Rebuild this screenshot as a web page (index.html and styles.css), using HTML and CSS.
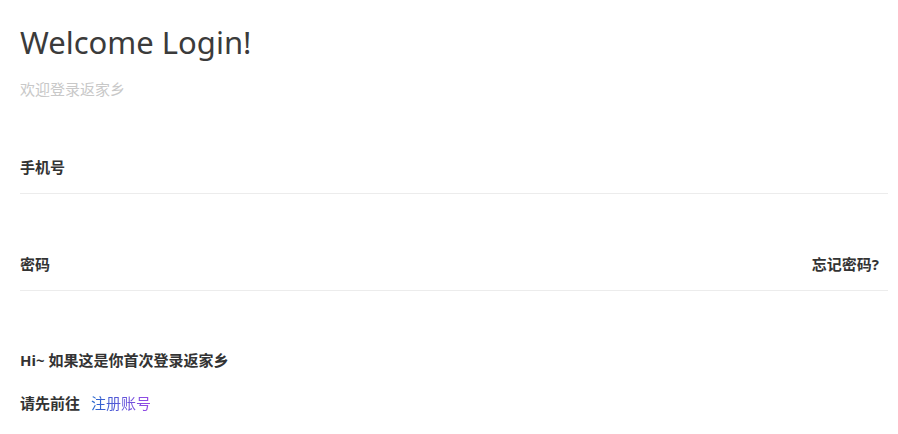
FILE: index.html
```html
<!DOCTYPE html>
<html lang="zh-CN">
<head>
    <meta charset="UTF-8">
    <meta name="viewport" content="width=device-width, initial-scale=1.0">
    <title>登录</title>
    <link rel="stylesheet" href="styles.css">
</head>
<body>
    <div class="login-container">
        <h1>Welcome Login!</h1>
        <p class="sub-title">欢迎登录返家乡</p>
        <form>
            <div class="form-item">
                <label for="phone">手机号</label>
                <input type="text" id="phone" name="phone">
            </div>
            <div class="form-item">
                <label for="password">密码</label>
                <input type="password" id="password" name="password">
                <a class="forget" href="#">忘记密码?</a>
            </div>
        </form>
        <p class="tips">Hi~ 如果这是你首次登录返家乡</p>
        <p class="tips register">请先前往 <a href="#">注册账号</a></p>
    </div>
</body>
</html>
```

FILE: styles.css
```css
body {
    margin: 0;
    font-family: "Noto Sans", "Noto Sans CJK SC", sans-serif;
    background-color: #ffffff;
    color: #333;
}
.login-container {
    padding: 22px 10px 0 20px;
}
.login-container h1 {
    margin: 0;
    font-size: 31px;
    line-height: 40px;
    font-weight: normal;
    color: #3b3b3b;
}
.sub-title {
    margin: 17px 0 0;
    font-size: 15px;
    line-height: 20px;
    color: #c8c8c8;
}
.form-item {
    display: flex;
    align-items: center;
    padding: 60px 9px 16px 0;
    border-bottom: 1px solid #ececec;
}
.form-item:first-child {
    padding-top: 58px;
}
.form-item label {
    font-size: 15px;
    line-height: 20px;
    font-weight: bold;
    color: #333;
}
.form-item input {
    flex: 1;
    border: none;
    outline: none;
    height: 20px;
    padding: 0 10px;
    background: transparent;
}
.form-item .forget {
    font-size: 15px;
    line-height: 20px;
    font-weight: bold;
    color: #333;
    text-decoration: none;
}
.tips {
    margin: 59px 0 0;
    font-size: 15px;
    line-height: 20px;
    font-weight: bold;
    color: #333;
}
.tips.register {
    margin-top: 23px;
}
.register a {
    margin-left: 7px;
    font-weight: normal;
    text-decoration: none;
    background: linear-gradient(to right, #2266cc, #9b48e6);
    -webkit-background-clip: text;
    background-clip: text;
    color: transparent;
}
```
